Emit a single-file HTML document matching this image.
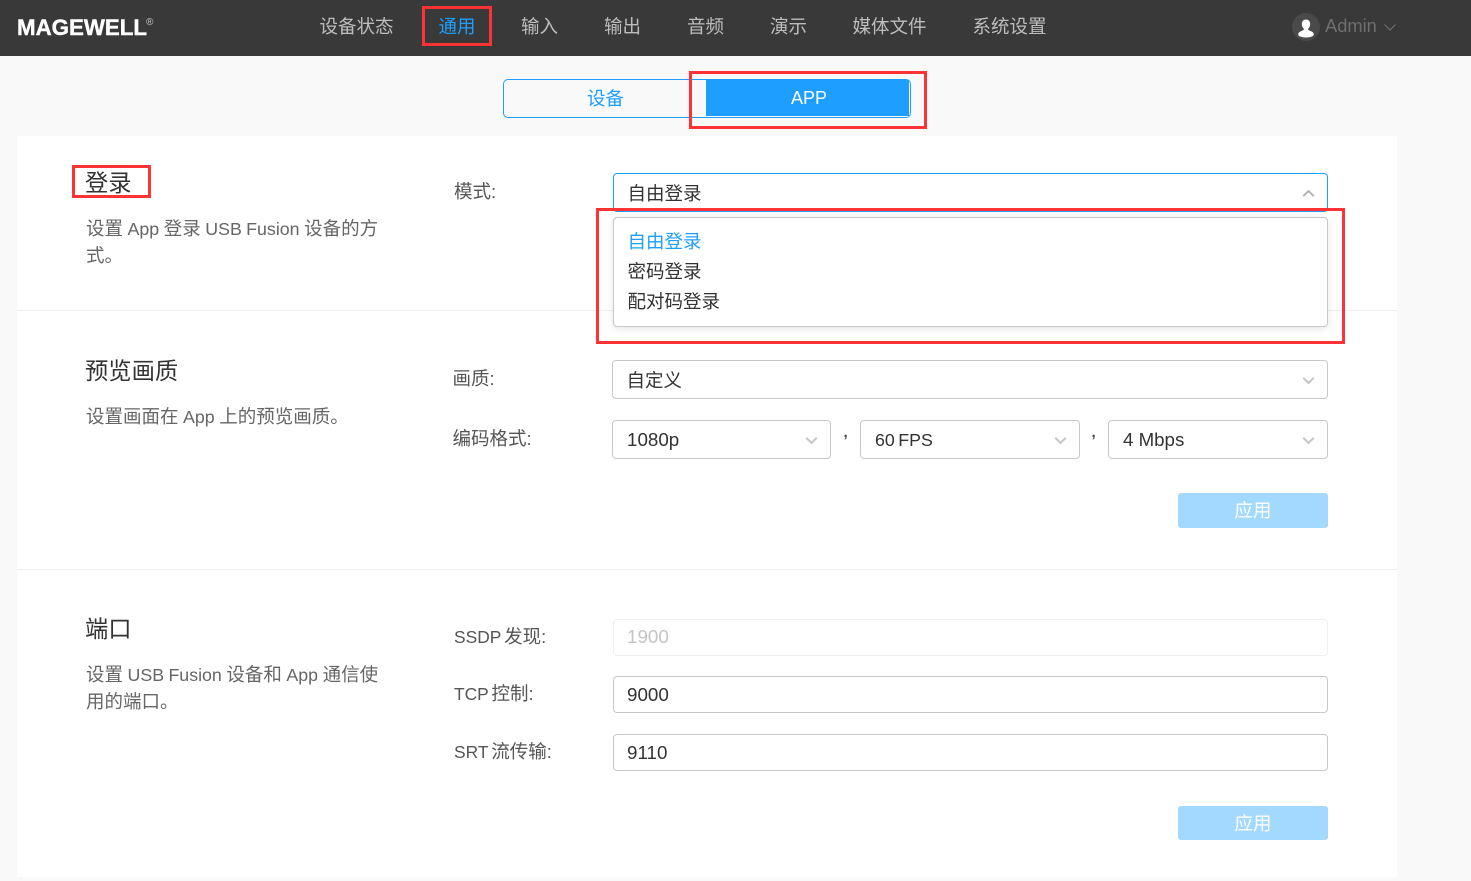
<!DOCTYPE html>
<html lang="zh">
<head>
<meta charset="utf-8">
<title>MAGEWELL</title>
<style>
html,body{margin:0;padding:0;width:1471px;height:881px;overflow:hidden;background:#f9f9f9}
body{position:relative;font-family:"Liberation Sans","Noto Sans CJK SC",sans-serif;color:#333}
div,svg{position:absolute;box-sizing:border-box}
i{font-style:normal}
.t{white-space:nowrap;line-height:24px;height:24px;font-size:18.5px}
.nav{color:#bdbdbd;top:15px}
.h{color:#333;font-size:23.3px;line-height:30px;height:30px}
.d{color:#666;font-size:18.5px;line-height:26.5px;white-space:nowrap;word-spacing:-.6px}
.d i{font-size:17.8px}
.l{color:#555}
.l i{font-size:17.4px;word-spacing:-1.8px}
.v{color:#333}
.box{background:#fff;border:1px solid #c8c8c8;border-radius:4px}
.red{border:3px solid #f33;background:none}
.btn{background:#a3d9ff;color:#fff;border-radius:3px;font-size:18.5px;text-align:center;line-height:35px;width:150px;left:1178px}
.line{left:17px;width:1380px;height:1px;background:#eee}
.comma{font-size:15px;font-weight:700;color:#444}
</style>
</head>
<body>
<div style="left:0;top:0;width:1471px;height:56px;background:#393939"></div>

<svg style="left:14px;top:12px" width="145" height="28" viewBox="0 0 145 28"><text x="3" y="23" font-family="Liberation Sans" font-weight="700" font-size="22" fill="#fff" stroke="#fff" stroke-width=".4" textLength="130" lengthAdjust="spacingAndGlyphs">MAGEWELL</text><text x="132" y="13" font-family="Liberation Sans" font-size="10" fill="#ccc">®</text></svg>

<div class="t nav" style="left:319.5px">设备状态</div>
<div class="t" style="left:438.5px;top:15px;color:#1e9fff">通用</div>
<div class="t nav" style="left:521px">输入</div>
<div class="t nav" style="left:604px">输出</div>
<div class="t nav" style="left:687px">音频</div>
<div class="t nav" style="left:770px">演示</div>
<div class="t nav" style="left:852.5px">媒体文件</div>
<div class="t nav" style="left:972.5px">系统设置</div>
<div class="red" style="left:422px;top:6px;width:70px;height:40px"></div>

<svg style="left:1292px;top:13px" width="28" height="28" viewBox="0 0 28 28"><circle cx="14" cy="14" r="14" fill="#4a4a4a"/><path d="M14 6.5c-2.8 0-4.2 2.2-4.2 4.6 0 2 .9 3.7 2 4.6v1.2c-1.9 1.1-4.6 1.6-5.5 3.7-.2.6 0 1.6.7 2.3 1.8 1.2 4.2 1.6 7 1.6s5.2-.4 7-1.6c.7-.7.9-1.7.7-2.3-.9-2.1-3.6-2.6-5.5-3.7v-1.2c1.1-.9 2-2.6 2-4.6 0-2.4-1.4-4.6-4.2-4.6z" fill="#fff"/></svg>
<div class="t" style="left:1325px;top:14px;color:#6e6e6e;font-size:18.3px">Admin</div>
<svg style="left:1383px;top:23px" width="14" height="9" viewBox="0 0 14 9"><path d="M1.5 1.5 7 7l5.5-5.5" fill="none" stroke="#6e6e6e" stroke-width="1.2"/></svg>

<div style="left:503px;top:79px;width:408px;height:39px;border:1px solid #1e9fff;border-radius:5px;background:#f9f9f9"></div>
<div style="left:706px;top:80px;width:203px;height:36px;background:#1e9fff"></div>
<div class="t" style="left:587px;top:86.5px;color:#1e9fff">设备</div>
<div class="t" style="left:791px;top:86px;color:#fff;font-size:18px">APP</div>
<div class="red" style="left:689px;top:71px;width:238px;height:58px"></div>

<div style="left:17px;top:136px;width:1380px;height:741px;background:#fff"></div>
<div class="line" style="top:310px"></div>
<div class="line" style="top:569px"></div>

<div class="t h" style="left:85px;top:168px">登录</div>
<div class="red" style="left:72px;top:165px;width:79px;height:33px"></div>
<div class="d" style="left:86px;top:216px">设置 <i>App</i> 登录 <i>USB Fusion</i> 设备的方<br>式。</div>
<div class="t l" style="left:454px;top:179.5px">模式:</div>
<div class="box" style="left:613px;top:173px;width:715px;height:39px;border-color:#1e9fff"></div>
<div class="t v" style="left:627.5px;top:181.5px">自由登录</div>
<svg style="left:1302px;top:189px" width="13" height="9" viewBox="0 0 13 9"><path d="M1.2 7.2 6.5 2l5.3 5.2" fill="none" stroke="#b5b5b5" stroke-width="2"/></svg>

<div class="box" style="left:613px;top:217px;width:715px;height:110px;box-shadow:0 2px 8px rgba(0,0,0,.1)"></div>
<div class="t" style="left:627.5px;top:229.5px;color:#1e9fff">自由登录</div>
<div class="t v" style="left:627.5px;top:259.5px">密码登录</div>
<div class="t v" style="left:627.5px;top:289.5px">配对码登录</div>
<div class="red" style="left:596px;top:208px;width:749px;height:136px"></div>

<div class="t h" style="left:85px;top:356px">预览画质</div>
<div class="d" style="left:86px;top:404px">设置画面在 <i>App</i> 上的预览画质。</div>
<div class="t l" style="left:452.5px;top:366.5px">画质:</div>
<div class="box" style="left:612px;top:360px;width:716px;height:39px"></div>
<div class="t v" style="left:626.5px;top:368.5px">自定义</div>
<svg style="left:1302px;top:376px" width="13" height="9" viewBox="0 0 13 9"><path d="M1.2 1.8 6.5 7l5.3-5.2" fill="none" stroke="#c4c4c4" stroke-width="2"/></svg>

<div class="t l" style="left:452.5px;top:426.5px">编码格式:</div>
<div class="box" style="left:612px;top:420px;width:219px;height:39px"></div>
<div class="t v" style="left:627px;top:428px;font-size:18.8px">1080p</div>
<svg style="left:805px;top:436px" width="13" height="9" viewBox="0 0 13 9"><path d="M1.2 1.8 6.5 7l5.3-5.2" fill="none" stroke="#c4c4c4" stroke-width="2"/></svg>
<div class="t comma" style="left:843.5px;top:421px">,</div>
<div class="box" style="left:860px;top:420px;width:220px;height:39px"></div>
<div class="t v" style="left:875px;top:428px;font-size:17.8px;word-spacing:-1.5px">60 FPS</div>
<svg style="left:1054px;top:436px" width="13" height="9" viewBox="0 0 13 9"><path d="M1.2 1.8 6.5 7l5.3-5.2" fill="none" stroke="#c4c4c4" stroke-width="2"/></svg>
<div class="t comma" style="left:1091.5px;top:421px">,</div>
<div class="box" style="left:1108px;top:420px;width:220px;height:39px"></div>
<div class="t v" style="left:1123px;top:428px;font-size:18.7px">4 Mbps</div>
<svg style="left:1302px;top:436px" width="13" height="9" viewBox="0 0 13 9"><path d="M1.2 1.8 6.5 7l5.3-5.2" fill="none" stroke="#c4c4c4" stroke-width="2"/></svg>
<div class="btn" style="top:493px;height:35px">应用</div>

<div class="t h" style="left:85px;top:614px">端口</div>
<div class="d" style="left:86px;top:662px">设置 <i>USB Fusion</i> 设备和 <i>App</i> 通信使<br>用的端口。</div>
<div class="t l" style="left:454px;top:625px"><i>SSDP </i>发现:</div>
<div class="box" style="left:613px;top:619px;width:715px;height:37px;border-color:#eee"></div>
<div class="t" style="left:627px;top:625px;color:#c4c4c4;font-size:18.8px">1900</div>
<div class="t l" style="left:454px;top:682px"><i>TCP </i>控制:</div>
<div class="box" style="left:613px;top:676px;width:715px;height:37px"></div>
<div class="t v" style="left:627px;top:683px;font-size:18.8px">9000</div>
<div class="t l" style="left:454px;top:740px"><i>SRT </i>流传输:</div>
<div class="box" style="left:613px;top:734px;width:715px;height:37px"></div>
<div class="t v" style="left:627px;top:741px;font-size:18.8px">9110</div>
<div class="btn" style="top:806px;height:34px">应用</div>
</body>
</html>
